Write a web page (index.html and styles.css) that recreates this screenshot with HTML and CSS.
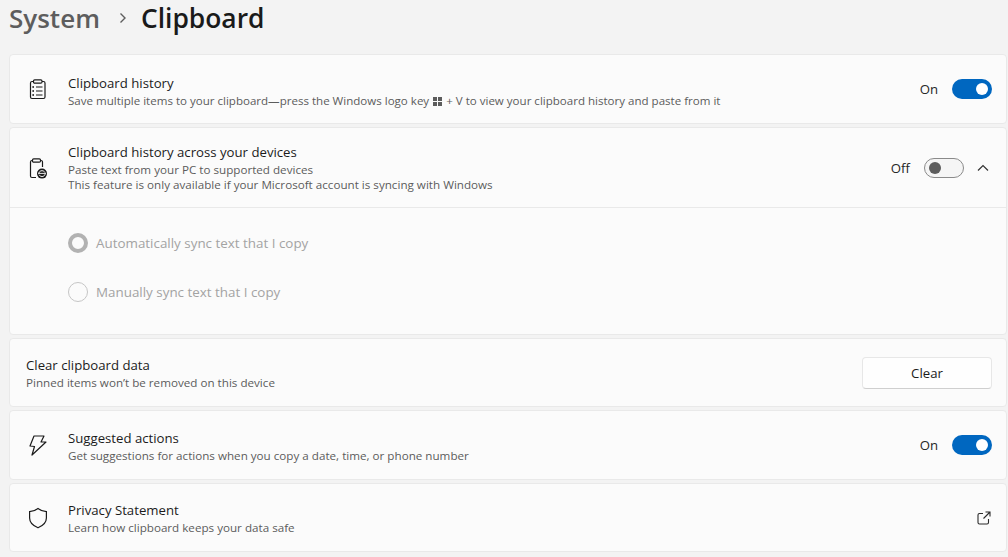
FILE: index.html
```html
<!DOCTYPE html>
<html lang="en">
<head>
<meta charset="utf-8">
<title>Clipboard</title>
<link rel="stylesheet" href="styles.css">
</head>
<body>
<header class="crumbs">
  <span class="crumb-parent">System</span>
  <svg class="crumb-sep" width="10" height="12" viewBox="0 0 10 12"><path d="M2.500 1.500 7 6l-4.500 4.500" fill="none" stroke="#5d5d5d" stroke-width="1.400"/></svg>
  <span class="crumb-current">Clipboard</span>
</header>
<main class="list">
  <section class="card">
    <div class="row row-icon row-a">
      <svg class="icon" width="20" height="22" viewBox="0 0 20 22" fill="none" stroke="#1b1b1b" stroke-width="1.200"><path d="M6.500 3.500H5A1.500 1.500 0 0 0 3.500 5v14A1.500 1.500 0 0 0 5 20.500h11.500A1.500 1.500 0 0 0 18 19V5a1.500 1.500 0 0 0-1.500-1.500H15"/><rect x="6.500" y="1.800" width="8.500" height="3.400" rx="1.200"/><path d="M9 9h6.500M9 13h6.500M9 17h6.500"/><path d="M5.500 9h1.300M5.500 13h1.300M5.500 17h1.300" stroke-width="1.800"/></svg>
      <div class="text text-first">
        <div class="title">Clipboard history</div>
        <div class="sub sub-tight">Save multiple items to your clipboard—press the Windows logo key <svg class="winkey" width="9" height="9" viewBox="0 0 9 9"><path fill="#5c5c5c" d="M0 0h4v4H0zM5 0h4v4H5zM0 5h4v4H0zM5 5h4v4H5z"/></svg> + V to view your clipboard history and paste from it</div>
      </div>
      <span class="state">On</span>
      <span class="toggle on"><span class="knob"></span></span>
    </div>
  </section>
  <section class="card">
    <div class="row row-icon row-b">
      <svg class="icon" width="20" height="22" viewBox="0 0 20 22" fill="none" stroke="#1b1b1b" stroke-width="1.200"><path d="M5.500 3.500H5A1.500 1.500 0 0 0 3.500 5v14A1.500 1.500 0 0 0 5 20.500h4"/><path d="M13.500 3.500h.5A1.500 1.500 0 0 1 15.500 5v5"/><rect x="5.500" y="1.800" width="8" height="3.400" rx="1.200"/><circle cx="15" cy="16.600" r="5" fill="#1b1b1b" stroke="none"/><path d="M11.800 16c.6-1.700 2-2.300 3.200-2.300 1.200 0 2.300.6 3 1.800M18.200 17.200c-.6 1.700-2 2.300-3.200 2.300-1.200 0-2.300-.6-3-1.800" stroke="#fff" stroke-width="1"/><path d="M11 16.400h8" stroke="#fff" stroke-width=".9"/></svg>
      <div class="text">
        <div class="title">Clipboard history across your devices</div>
        <div class="sub">Paste text from your PC to supported devices</div>
        <div class="sub">This feature is only available if your Microsoft account is syncing with Windows</div>
      </div>
      <span class="state">Off</span>
      <span class="toggle off"><span class="knob"></span></span>
      <svg class="chevron" width="12" height="8" viewBox="0 0 12 8"><path d="M1 6.500 6 1.500l5 5" fill="none" stroke="#333" stroke-width="1.200"/></svg>
    </div>
    <div class="options">
      <div class="option"><span class="radio selected"></span><span class="option-label">Automatically sync text that I copy</span></div>
      <div class="option"><span class="radio"></span><span class="option-label">Manually sync text that I copy</span></div>
    </div>
  </section>
  <section class="card">
    <div class="row row-plain row-c">
      <div class="text">
        <div class="title">Clear clipboard data</div>
        <div class="sub">Pinned items won’t be removed on this device</div>
      </div>
      <button class="btn" type="button">Clear</button>
    </div>
  </section>
  <section class="card">
    <div class="row row-icon row-a">
      <svg class="icon" width="20" height="22" viewBox="0 0 20 22" fill="none" stroke="#1b1b1b" stroke-width="1.200" stroke-linejoin="round"><path d="M7 2h10l-3 6h5L5 21l2.500-8.500L3 12z"/></svg>
      <div class="text text-mid">
        <div class="title">Suggested actions</div>
        <div class="sub">Get suggestions for actions when you copy a date, time, or phone number</div>
      </div>
      <span class="state">On</span>
      <span class="toggle on"><span class="knob"></span></span>
    </div>
  </section>
  <section class="card">
    <div class="row row-icon row-c">
      <svg class="icon" width="20" height="22" viewBox="0 0 20 22" fill="none" stroke="#1b1b1b" stroke-width="1.200"><path d="M11 1.500c2.200 1.800 5.200 3 8.400 3.100V11c0 4.500-3.400 7.700-8.400 9.800C6 18.700 2.600 15.500 2.600 11V4.600C5.800 4.500 8.800 3.300 11 1.500z"/></svg>
      <div class="text">
        <div class="title">Privacy Statement</div>
        <div class="sub">Learn how clipboard keeps your data safe</div>
      </div>
      <svg class="external" width="14" height="14" viewBox="0 0 14 14" fill="none" stroke="#2b2b2b" stroke-width="1.100"><path d="M6 2.500H2.500a1.500 1.500 0 0 0-1.500 1.500v7.500A1.500 1.500 0 0 0 2.500 13H10a1.500 1.500 0 0 0 1.500-1.500V8"/><path d="M6.500 7.500 13 1M8.500 1H13v4.500"/></svg>
    </div>
  </section>
</main>
</body>
</html>
```
FILE: styles.css
```css
* { box-sizing: border-box; }
html, body { margin: 0; height: 100%; }
body {
  background: #f3f3f3;
  font-family: "Open Sans", "Noto Sans", sans-serif;
  color: #1b1b1b;
  overflow: hidden;
  width: 1008px;
  height: 557px;
  padding: 0 1px 0 9px;
}
.crumbs {
  display: flex;
  align-items: center;
  height: 54px;
  padding-bottom: 18px;
  font-size: 26.400px;
  font-weight: 600;
  line-height: 37px;
}
.crumb-parent { color: #5d5d5d; font-size: 26px; }
.crumb-sep { margin: 0 13px 0 18px; }
.crumb-current { color: #1a1a1a; }
.list { display: flex; flex-direction: column; gap: 3px; }
.card {
  background: #fbfbfb;
  border: 1px solid #e9e9e9;
  border-radius: 4px;
}
.row { display: flex; align-items: center; padding-right: 14px; }
.row-a { height: 68px; }
.row-b { height: 80px; border-bottom: 1px solid #e9e9e9; padding-right: 17px; }
.row-c { height: 67px; }
.row-icon { padding-left: 17px; }
.row-plain { padding-left: 16px; }
.icon { flex: none; margin-right: 21px; }
.text { flex: 1; min-width: 0; }
.text-first { padding-top: 4px; }
.text-mid { padding-top: 2px; }
.title { font-size: 13.200px; line-height: 19px; }
.sub { font-size: 11.650px; line-height: 15px; color: #5c5c5c; }
.sub-tight { font-size: 11.550px; }
.winkey { vertical-align: -1px; margin: 0 1px; }
.state { font-size: 13.200px; margin-right: 14px; color: #262626; }
.toggle {
  display: flex;
  align-items: center;
  width: 40px;
  height: 20px;
  border-radius: 10px;
  padding: 0 4px;
  flex: none;
}
.toggle .knob { width: 12px; height: 12px; border-radius: 50%; }
.toggle.on { background: #0067c0; justify-content: flex-end; }
.toggle.on .knob { background: #fff; }
.toggle.off { background: #f5f5f5; border: 1px solid #8a8a8a; margin-right: 13px; }
.toggle.off .knob { background: #5d5d5d; }
.chevron { flex: none; }
.external { flex: none; margin-right: 1px; }
.options {
  height: 126px;
  padding: 10px 0 0 58px;
  display: flex;
  flex-direction: column;
}
.option { display: flex; align-items: center; height: 49px; }
.radio {
  width: 20px;
  height: 20px;
  border-radius: 50%;
  border: 1px solid #c6c6c6;
  background: #fbfbfb;
  margin-right: 8px;
  flex: none;
}
.radio.selected { border: 4px solid #b2b2b2; background: #fbfbfb; }
.option-label { font-size: 13.400px; color: #a3a3a3; }
.btn {
  width: 130px;
  height: 32px;
  background: #fefefe;
  border: 1px solid #e7e7e7;
  border-bottom-color: #cfcfcf;
  border-radius: 4px;
  font: inherit;
  font-size: 13.200px;
  color: #1b1b1b;
}
```
